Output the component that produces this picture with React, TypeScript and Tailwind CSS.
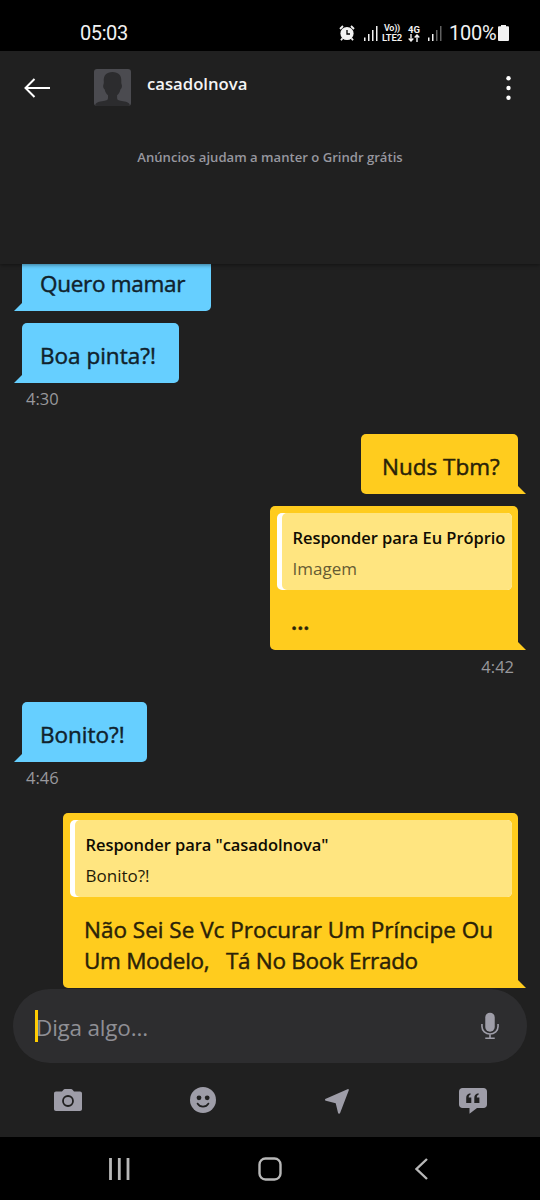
import React from 'react';
import { clsx } from 'clsx';

type Quote = { title: string; text: string; muted?: boolean };

type Line = { text: string; className?: string };

type BubbleProps = {
  lines: Line[];
  mine?: boolean;
  quote?: Quote;
  className: string;
  textClass: string;
};

const Bubble = ({ lines, mine, quote, className, textClass }: BubbleProps) => (
  <div
    className={clsx(
      'relative flex shrink-0 flex-col rounded-[5px]',
      mine ? 'self-end rounded-br-none bg-[#ffcc1e] text-[#2a2208]' : 'rounded-bl-none bg-[#66cfff] text-[#10222c]',
      className
    )}
  >
    {quote && (
      <div className="mt-[7px] mr-[6px] ml-[7px] h-[77px] shrink-0 rounded-[5px] bg-white pl-[5px]">
        <div className="h-full rounded-[5px] bg-[#ffe580] pt-[9px] pl-[10.5px] whitespace-nowrap">
          <p className="text-[16.5px] leading-[31px] font-semibold tracking-[-0.06px] text-[#0f0c02]">{quote.title}</p>
          <p className={clsx('text-[17px] leading-[31px]', quote.muted ? 'text-[#665b33]' : 'text-[#1f1a06]')}>
            {quote.text}
          </p>
        </div>
      </div>
    )}
    <div
      className={clsx(
        'text-[22.5px] leading-[31px] whitespace-pre [-webkit-text-stroke:0.45px_currentColor]',
        textClass
      )}
    >
      {lines.map((line) => (
        <p key={line.text} className={line.className}>
          {line.text}
        </p>
      ))}
    </div>
    <svg className={clsx('absolute bottom-0 h-2 w-2', mine ? '-right-2' : '-left-2')} viewBox="0 0 8 8">
      {mine ? <path d="M0 0l8 8H0z" fill="#ffcc1e" /> : <path d="M8 0v8H0z" fill="#66cfff" />}
    </svg>
  </div>
);

const Time = ({ value, mine }: { value: string; mine?: boolean }) => (
  <p
    className={clsx(
      'h-[51px] shrink-0 text-[16.5px] leading-6 text-[#98989c]',
      mine ? 'self-end pt-[5px] pr-1' : 'pt-1 pl-1'
    )}
  >
    {value}
  </p>
);

const SignalBars = ({ weak }: { weak?: boolean }) => (
  <svg className="h-4 w-[15px] shrink-0" viewBox="0 0 15 16" fill="#f2f2f2">
    <path d="M1 12.500h1.500V16H1zM5 9h1.500v7H5z" />
    <path d="M9 5h1.500v11H9zM13 1h1.500v15H13z" opacity={weak ? 0.4 : 1} />
  </svg>
);

const StatusBar = () => (
  <div className="flex h-[51px] shrink-0 items-center bg-black pt-[15px] pl-20 font-[Roboto] text-[#f2f2f2]">
    <span className="w-[259px] shrink-0 text-[20px] leading-6 tracking-[-0.4px]">05:03</span>
    <svg className="h-4 w-4 shrink-0" viewBox="0 0 16 16" fill="none">
      <circle cx="8" cy="8.500" r="6.600" fill="#f2f2f2" />
      <path d="M1 4l3-3M15 4l-3-3M3.500 13.200L2 15.300M12.500 13.200l1.500 2.100" stroke="#f2f2f2" strokeWidth="1.800" />
      <path d="M8 5v4h3" stroke="#000" strokeWidth="1.300" />
    </svg>
    <div className="ml-2">
      <SignalBars />
    </div>
    <div className="ml-1 w-[21px] shrink-0 text-[9px] leading-[9px] font-semibold whitespace-nowrap">
      <p className="pl-[2px] tracking-[-0.3px]">Vo))</p>
      <p className="text-[9.5px] tracking-[-0.2px]">LTE2</p>
    </div>
    <div className="ml-[3px] flex w-4 shrink-0 flex-col items-center text-[9.5px] leading-[9px] font-bold">
      <span>4G</span>
      <svg className="h-2 w-3" viewBox="0 0 12 8" fill="none" stroke="#f2f2f2" strokeWidth="1.400">
        <path d="M3 0v7M.7 4.500L3 7l2.300-2.500M9 8V1M6.700 3.500L9 1l2.300 2.500" />
      </svg>
    </div>
    <div className="ml-[5px]">
      <SignalBars weak />
    </div>
    <span className="ml-[7px] w-[49px] shrink-0 text-[20px] leading-6 tracking-[-0.2px]">100%</span>
    <svg className="h-4 w-[11px] shrink-0" viewBox="0 0 11 16" fill="#f2f2f2">
      <path d="M3 0h5v1.300h1.800c.7 0 1.200.5 1.200 1.200v12.200c0 .8-.5 1.300-1.200 1.300H1.200C.5 16 0 15.500 0 14.700V2.500c0-.7.5-1.200 1.200-1.200H3z" />
    </svg>
  </div>
);

const Header = () => (
  <header className="relative z-10 h-[213px] shrink-0 bg-[#202020] shadow-[0_1px_4px_rgba(0,0,0,0.45)]">
    <div className="flex h-[74px] items-center">
      <svg className="ml-6 h-5 w-[26px]" viewBox="0 0 26 20" fill="none" stroke="#fff" strokeWidth="2">
        <path d="M26 10H1.500M10.500 1L1.500 10l9 9" />
      </svg>
      <svg className="mb-[2px] ml-11 h-[37px] w-[37px] rounded-[3px]" viewBox="0 0 37 37">
        <rect width="37" height="37" fill="#4b4b50" />
        <path
          d="M18.500 3c6 0 9.300 3.500 8.800 9.500-.1 1.200 0 2 .3 2.700.8 1.800.2 4.300-1.200 5.300-.6 3-1.800 4.700-3.300 5.800v3c0 2 2 2.500 6 3 4.500.5 6.500 1.700 7 4.700H1c.5-3 2.500-4.200 7-4.700 4-.5 6-1 6-3v-3c-1.500-1.100-2.700-2.800-3.300-5.800-1.400-1-2-3.500-1.200-5.300.3-.7.400-1.500.3-2.700C9.200 6.500 12.500 3 18.500 3z"
          fill="#2c2c2e"
        />
      </svg>
      <h1 className="ml-4 pb-2 text-[16.7px] font-semibold text-[#f4f4f4]">casadolnova</h1>
      <svg className="mr-[29px] ml-auto h-6 w-[5px]" viewBox="0 0 5 24" fill="#fff">
        <circle cx="2.500" cy="2.200" r="2.200" />
        <circle cx="2.500" cy="12" r="2.200" />
        <circle cx="2.500" cy="21.800" r="2.200" />
      </svg>
    </div>
    <p className="pt-[22px] text-center text-[13.1px] leading-5 font-semibold text-[#97979f]">
      Anúncios ajudam a manter o Grindr grátis
    </p>
  </header>
);

const Composer = () => (
  <div className="mx-[13px] mt-px flex h-[74px] shrink-0 items-center rounded-full bg-[#2d2d2f]">
    <span className="ml-[22px] h-8 w-[3px] bg-[#ffcc00]" />
    <span className="-ml-0.5 pt-[3px] text-[22.5px] leading-8 tracking-[-0.2px] text-[#8f8f95]">Diga algo...</span>
    <svg className="mr-[28px] ml-auto h-7 w-[18px]" viewBox="0 0 19 28" fill="none" stroke="#9e9da8" strokeWidth="1.700">
      <rect x="4.500" y="0" width="10" height="20" rx="5" fill="#9e9da8" stroke="none" />
      <path d="M1 12v2.500a8.500 8 0 0 0 17 0V12M9.500 22.500v4.500M4.500 27h10" />
    </svg>
  </div>
);

const Toolbar = () => (
  <div className="grid h-[74px] shrink-0 grid-cols-4 place-items-center text-[#9e9da8]">
    <svg className="h-[22px] w-7" viewBox="0 0 28 22" fill="none">
      <path
        d="M8 2.500L9.500.700C9.800.300 10.300 0 11 0h6c.7 0 1.200.3 1.500.7L20 2.500h6c1.200 0 2 .8 2 2V20c0 1.200-.8 2-2 2H2c-1.200 0-2-.8-2-2V4.500c0-1.200.8-2 2-2z"
        fill="currentColor"
      />
      <circle cx="14" cy="12" r="5" stroke="#202020" strokeWidth="1.800" />
    </svg>
    <svg className="h-[26px] w-[26px]" viewBox="0 0 26 26" fill="none">
      <circle cx="13" cy="13" r="13" fill="currentColor" />
      <circle cx="9" cy="10.800" r="2.400" fill="#202020" />
      <circle cx="17.200" cy="10.800" r="2.400" fill="#202020" />
      <path d="M7.500 16.500c2.500 4.200 8.500 4.200 11 0" stroke="#202020" strokeWidth="1.600" strokeLinecap="round" />
    </svg>
    <svg className="mt-[2px] mr-[2px] h-[25px] w-6" viewBox="0 0 24 25" fill="currentColor">
      <path d="M22.500.200c1-.4 1.600.2 1.200 1.200L15.200 23.800c-.5 1.300-2 1.100-2.200-.1L10.700 14.200.900 11.800c-1.200-.3-1.200-1.600-.1-2z" />
    </svg>
    <svg className="mt-[2px] h-[26px] w-7" viewBox="0 0 28 26" fill="none">
      <path
        d="M3.500 0h21C26.500 0 28 1.500 28 3.500v13c0 2-1.500 3.500-3.500 3.500H18l-7.500 5.800V20h-7C1.500 20 0 18.500 0 16.500v-13C0 1.500 1.500 0 3.500 0z"
        fill="currentColor"
      />
      <path
        d="M7.200 15V9.800C7.200 7.300 8.700 5.600 11.500 5.300v1.500c-1.200.3-1.800 1.200-1.800 2.800h2.600V15zM15.300 15V9.800c0-2.500 1.500-4.200 4.300-4.500v1.500c-1.200.3-1.800 1.200-1.800 2.800h2.600V15z"
        fill="#202020"
      />
    </svg>
  </div>
);

const NavBar = () => (
  <div className="flex h-[63px] shrink-0 items-center bg-black pl-[109px] text-[#b8b8b8]">
    <svg className="h-[22px] w-[21px]" viewBox="0 0 21 22" fill="none" stroke="currentColor" strokeWidth="2.800">
      <path d="M1.500 0v22M10.300 0v22M19 0v22" />
    </svg>
    <svg className="ml-[128px] h-6 w-6" viewBox="0 0 24 24" fill="none" stroke="currentColor" strokeWidth="2.400">
      <rect x="1.500" y="1.500" width="21" height="21" rx="6" />
    </svg>
    <svg className="ml-[133px] h-[22px] w-[13px]" viewBox="0 0 13 22" fill="none" stroke="currentColor" strokeWidth="2.400">
      <path d="M12 1L1.500 11 12 21" />
    </svg>
  </div>
);

export default function App() {
  return (
    <div className="flex h-[1200px] w-[540px] flex-col overflow-hidden bg-[#202020] font-['Open_Sans','Noto_Sans',sans-serif]">
      <StatusBar />
      <Header />
      <main className="flex h-[724px] shrink-0 flex-col items-start px-[22px]">
        <Bubble
          lines={[{ text: 'Quero mamar', className: 'tracking-[-0.3px]' }]}
          className="h-[47px] w-[189px] rounded-t-none"
          textClass="pt-[4px] pl-[18px]"
        />
        <Bubble lines={[{ text: 'Boa pinta?!' }]} className="mt-3 h-[60px] w-[157px]" textClass="pt-[17px] pl-[18px]" />
        <Time value="4:30" />
        <Bubble mine lines={[{ text: 'Nuds Tbm?' }]} className="h-[60px] w-[157px]" textClass="pt-[17px] pl-[21px]" />
        <Bubble
          mine
          quote={{ title: 'Responder para Eu Próprio', text: 'Imagem', muted: true }}
          lines={[{ text: '...', className: 'font-semibold' }]}
          className="mt-3 h-[144px] w-[248px]"
          textClass="pt-[16px] pl-[21px]"
        />
        <Time mine value="4:42" />
        <Bubble lines={[{ text: 'Bonito?!' }]} className="mt-px h-[60px] w-[125px]" textClass="pt-[17px] pl-[18px]" />
        <Time value="4:46" />
        <Bubble
          mine
          quote={{ title: 'Responder para "casadolnova"', text: 'Bonito?!' }}
          lines={[
            { text: 'Não Sei Se Vc Procurar Um Príncipe Ou' },
            { text: 'Um Modelo,   Tá No Book Errado', className: 'tracking-[-0.3px]' },
          ]}
          className="h-[175px] w-[455px]"
          textClass="pt-[17px] pl-[21px]"
        />
      </main>
      <Composer />
      <Toolbar />
      <NavBar />
    </div>
  );
}
